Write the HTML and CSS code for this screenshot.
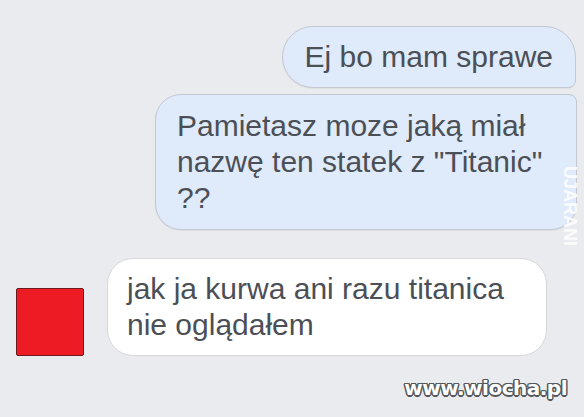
FILE: index.html
```html
<!DOCTYPE html>
<html lang="pl">
<head>
<meta charset="utf-8">
<title>Czat</title>
<link rel="stylesheet" href="styles.css">
</head>
<body>
<main class="chat">
  <div class="msg-out msg-first">Ej bo mam sprawe</div>
  <div class="msg-out msg-last">Pamietasz moze jaką miał nazwę ten statek z "Titanic" ??</div>
  <div class="row-in">
    <div class="avatar"></div>
    <div class="msg-in">jak ja kurwa ani razu titanica nie oglądałem</div>
  </div>
</main>
<div class="mark-side">UJARANI</div>
<div class="mark-site">www.wiocha.pl</div>
</body>
</html>
```
FILE: styles.css
```css
html, body {
  margin: 0;
  padding: 0;
}
body {
  width: 584px;
  height: 417px;
  overflow: hidden;
  background: #e9ebee;
  font-family: "Liberation Sans", Arial, sans-serif;
  color: #4b4f56;
  position: relative;
}
.chat {
  display: flex;
  flex-direction: column;
  padding: 26px 8px 0 16px;
}
.msg-out {
  align-self: flex-end;
  box-sizing: border-box;
  background: #dfeafa;
  border: 1px solid #c2c9d3;
  font-size: 30px;
  line-height: 36px;
  box-shadow: 0 1px 1px rgba(0,0,0,0.05);
}
.msg-first {
  padding: 12px 22px;
  border-radius: 31px 31px 8px 31px;
}
.msg-last {
  margin-top: 6px;
  margin-right: -1px;
  max-width: 422px;
  padding: 13px 20px 13px 21px;
  border-radius: 26px 8px 26px 26px;
}
.row-in {
  display: flex;
  align-items: flex-end;
  gap: 23px;
  margin-top: 28px;
}
.avatar {
  width: 66px;
  height: 66px;
  background: #ed1c24;
  border: 1px solid #6b1a1c;
  border-radius: 2px;
  margin-bottom: 0;
}
.msg-in {
  box-sizing: border-box;
  max-width: 440px;
  background: #ffffff;
  border: 1px solid #d6d8db;
  border-radius: 26px;
  padding: 12px 20px 12px 19px;
  font-size: 30px;
  line-height: 36px;
}
.mark-side {
  position: absolute;
  left: 559px;
  top: 166px;
  writing-mode: vertical-rl;
  font-size: 18px;
  font-weight: bold;
  color: rgba(255,255,255,0.85);
  letter-spacing: 0;
}
.mark-site {
  position: absolute;
  right: 17px;
  top: 376px;
  font-family: "DejaVu Sans", sans-serif;
  font-size: 20px;
  font-weight: bold;
  color: #ffffff;
  letter-spacing: -0.5px;
  text-shadow:
    -1px -1px 0 #55585c, 1px -1px 0 #55585c, -1px 1px 0 #55585c, 1px 1px 0 #55585c,
    0 -1.5px 0 #55585c, 0 1.5px 0 #55585c, -1.5px 0 0 #55585c, 1.5px 0 0 #55585c;
}
```
